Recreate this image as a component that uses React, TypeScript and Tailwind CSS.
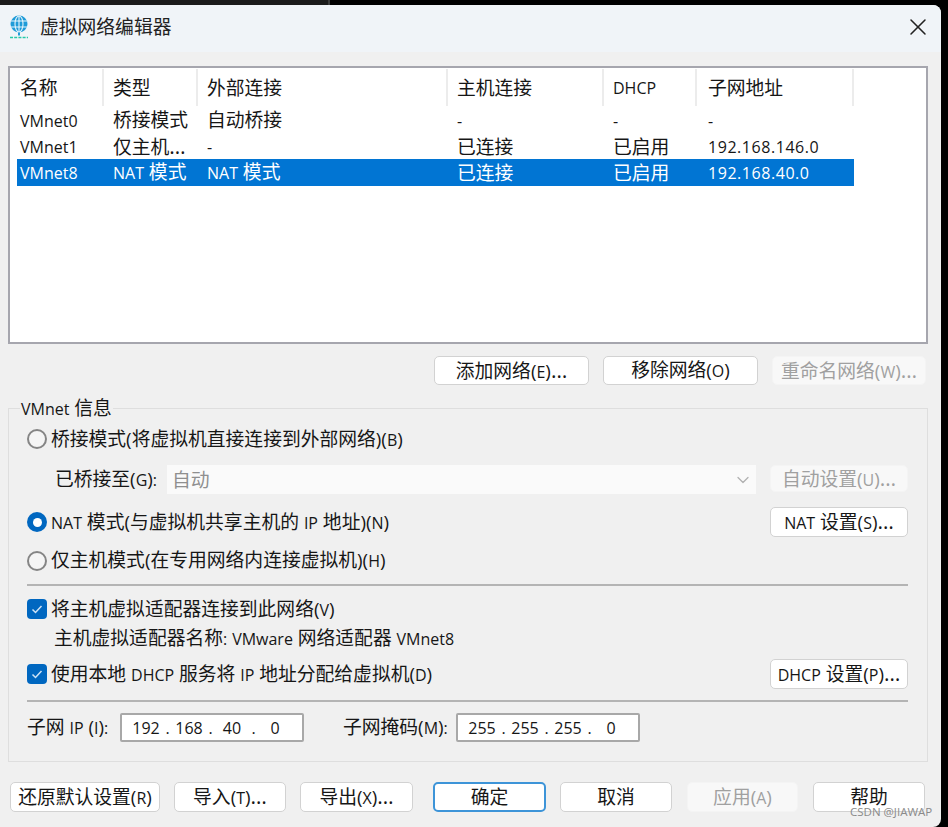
import React from 'react';
import { ChevronDown, X } from 'lucide-react';

const FONT = 'font-["Open_Sans","Noto_Sans_CJK_SC",sans-serif]';

const COLS = [
  { w: 'w-[87px]', pad: 'pl-[3px]' },
  { w: 'w-[94px]', pad: 'pl-[9px]' },
  { w: 'w-[250px]', pad: 'pl-[9px]' },
  { w: 'w-[156px]', pad: 'pl-[9px]' },
  { w: 'w-[93px]', pad: 'pl-[9px]' },
  { w: 'w-[157px]', pad: 'pl-[11px]' },
];

const HEADERS = ['名称', '类型', '外部连接', '主机连接', 'DHCP', '子网地址'];

const ROWS = [
  { cells: ['VMnet0', '桥接模式', '自动桥接', '-', '-', '-'], h: 'h-[26px]', selected: false },
  { cells: ['VMnet1', '仅主机…', '-', '已连接', '已启用', '192.168.146.0'], h: 'h-[26px] pt-[1px]', selected: false },
  { cells: ['VMnet8', 'NAT 模式', 'NAT 模式', '已连接', '已启用', '192.168.40.0'], h: 'h-[27px]', selected: true },
];

// latin runs sit smaller than the CJK around them, as in the dialog font;
// brackets and spaces stay at the full size
function T({ children }: { children: string }) {
  const parts = children.split(/([\x21-\x27\x2a-\x7e]+|…)/).filter(Boolean);
  return (
    <>
      {parts.map((p, i) => {
        if (p === '…') return <span key={i} className="text-[21px]">{p}</span>;
        if (/^[\x21-\x27\x2a-\x7e]+$/.test(p)) return <span key={i} className="text-[16px]">{p}</span>;
        return <span key={i} className="whitespace-pre">{p}</span>;
      })}
    </>
  );
}

function Btn({ className, children, disabled, primary }: { className: string; children: string; disabled?: boolean; primary?: boolean }) {
  const look = disabled
    ? 'bg-[#f8f8f8] border-[#f4f4f4] text-[#a0a0a0]'
    : primary
      ? 'bg-white border-[#3d94d8] border-2 text-[#161616]'
      : 'bg-white border-[#d2d2d2] text-[#161616]';
  return (
    <div className={`flex shrink-0 items-center justify-center whitespace-nowrap rounded-[5px] border ${look} ${className}`}>
      <div><T>{children}</T></div>
    </div>
  );
}

function Radio({ checked }: { checked?: boolean }) {
  if (checked) {
    return (
      <span className="flex h-[20px] w-[20px] shrink-0 items-center justify-center rounded-full bg-[#0067c0]">
        <span className="h-[9px] w-[9px] rounded-full bg-white" />
      </span>
    );
  }
  return <span className="h-[20px] w-[20px] shrink-0 rounded-full border-2 border-[#858585] bg-[#f5f5f5]" />;
}

function Check() {
  return (
    <span className="flex h-[20px] w-[20px] shrink-0 items-center justify-center rounded-[4px] bg-[#0067c0]">
      <svg viewBox="0 0 20 20" className="h-[20px] w-[20px]" fill="none" stroke="#cfe3f5" strokeWidth="1.5">
        <path d="M5.5 10.5l3 3 6-6.5" />
      </svg>
    </span>
  );
}

function NetIcon() {
  return (
    <svg viewBox="0 0 20 24" className="h-[24px] w-[20px] shrink-0" fill="none">
      <circle cx="10" cy="9" r="8.5" fill="#1f9bd8" />
      <g stroke="#e8f5fb" strokeWidth="1.1">
        <ellipse cx="10" cy="9" rx="4" ry="8" />
        <path d="M10 1v16M2 6h16M2 12h16" />
      </g>
      <path d="M10 17.5v3" stroke="#1f9bd8" strokeWidth="2" />
      <path d="M1 22.5h18" stroke="#25c9a8" strokeWidth="1.6" strokeDasharray="3 1.2" />
    </svg>
  );
}

function Sep() {
  return <div className="h-[2px] bg-[#b4b4b4]" />;
}

function Ip({ parts }: { parts: string[] }) {
  return (
    <div className="flex h-[29px] w-[184px] shrink-0 items-center rounded-[2px] border-2 border-[#a8a8a8] bg-white pl-[5px] text-[16px] text-[#161616]">
      {parts.map((p, i) => (
        <React.Fragment key={i}>
          <span className="w-[38px] shrink-0 text-center">{p}</span>
          {i < 3 && <span className="w-[5px] shrink-0 text-center">.</span>}
        </React.Fragment>
      ))}
    </div>
  );
}

export default function App() {
  return (
    <div className={`relative h-[827px] w-[948px] overflow-hidden bg-black text-[18.8px] leading-[26px] text-[#161616] ${FONT}`}>
      {/* strip of the desktop behind the dialog */}
      <div className="flex h-[5px]">
        <div className="w-[328px] bg-[#1b1b1b]" />
        <div className="w-[2px] bg-[#3a3a3a]" />
        <div className="flex-1 bg-black" />
      </div>

      <div className="flex h-[822px] w-[941px] flex-col rounded-tr-[8px] rounded-br-[8px] bg-[#f0f0f0]">
        {/* Title bar */}
        <div className="flex h-[47px] shrink-0 items-center rounded-tr-[8px] bg-[#f0f4f8] pb-[4px] pl-[9px] pr-[9px]">
          <NetIcon />
          <span className="ml-[11px] flex-1 text-[#222]">虚拟网络编辑器</span>
          <X className="h-[28px] w-[28px] text-[#222]" strokeWidth={1.3} />
        </div>

        <div className="flex flex-1 flex-col pl-[8px] pr-[13px]">
          {/* Network list */}
          <div className="mt-[14px] h-[278px] shrink-0 border-2 border-[#a6a6ae] bg-white pl-[7px]">
            <div className="flex h-[39px] items-center">
              {HEADERS.map((h, i) => (
                <div key={h} className={`flex h-[37px] items-center border-r-2 border-[#ececec] ${COLS[i].w} ${COLS[i].pad}`}>
                  <div><T>{h}</T></div>
                </div>
              ))}
            </div>
            {ROWS.map(r => (
              <div key={r.cells[0]} className={`flex items-center ${r.h} ${r.selected ? 'w-[837px] bg-[#0175d3] text-white' : ''}`}>
                {r.cells.map((c, i) => (
                  <div key={i} className={`whitespace-nowrap ${COLS[i].w} ${COLS[i].pad} ${i === 5 ? 'tracking-[0.55px]' : ''}`}>
                    <T>{c}</T>
                  </div>
                ))}
              </div>
            ))}
          </div>

          {/* List buttons */}
          <div className="mt-[12px] flex h-[29px] shrink-0 justify-end gap-[14px] pr-[2px]">
            <Btn className="w-[155px]">添加网络(E)…</Btn>
            <Btn className="w-[155px]">移除网络(O)</Btn>
            <Btn className="w-[154px]" disabled>重命名网络(W)…</Btn>
          </div>

          {/* VMnet info */}
          <fieldset className="mt-[10px] border border-[#dedede] pl-[18px] pr-[19px] pb-[19px]">
            <legend className="ml-[-7px] h-[26px] px-[1px] leading-[26px]"><T>VMnet 信息</T></legend>

            <div className="flex h-[36px] items-center gap-[4px]">
              <Radio />
              <span><T>桥接模式(将虚拟机直接连接到外部网络)(B)</T></span>
            </div>

            <div className="mt-[8px] flex h-[29px] items-center pl-[28px]">
              <span className="w-[112px] shrink-0"><T>已桥接至(G):</T></span>
              <div className="flex h-[29px] flex-1 items-center justify-between bg-[#fafafa] pl-[5px] pr-[3px] text-[#8f8f8f]">
                <span>自动</span>
                <ChevronDown className="h-[20px] w-[20px] text-[#b0b0b0]" strokeWidth={1.5} />
              </div>
              <Btn className="ml-[14px] h-[27px] w-[138px] self-start" disabled>自动设置(U)…</Btn>
            </div>

            <div className="mt-[13px] flex h-[30px] items-center gap-[4px]">
              <Radio checked />
              <span className="flex-1"><T>NAT 模式(与虚拟机共享主机的 IP 地址)(N)</T></span>
              <Btn className="h-[30px] w-[138px]">NAT 设置(S)…</Btn>
            </div>

            <div className="flex h-[47px] items-center gap-[4px]">
              <Radio />
              <span><T>仅主机模式(在专用网络内连接虚拟机)(H)</T></span>
            </div>

            <Sep />

            <div className="mt-[10px] flex h-[26px] items-center gap-[4px]">
              <Check />
              <span><T>将主机虚拟适配器连接到此网络(V)</T></span>
            </div>
            <div className="mt-[3px] h-[26px] pl-[27px]"><T>主机虚拟适配器名称: VMware 网络适配器 VMnet8</T></div>

            <div className="mt-[8px] flex h-[30px] items-center gap-[4px]">
              <Check />
              <span className="flex-1"><T>使用本地 DHCP 服务将 IP 地址分配给虚拟机(D)</T></span>
              <Btn className="h-[30px] w-[138px]">DHCP 设置(P)…</Btn>
            </div>

            <div className="mt-[11px]"><Sep /></div>

            <div className="mt-[11px] flex h-[29px] items-center">
              <span className="w-[93px] shrink-0"><T>子网 IP (I):</T></span>
              <Ip parts={['192', '168', '40', '0']} />
              <span className="ml-[39px] w-[113px] shrink-0"><T>子网掩码(M):</T></span>
              <Ip parts={['255', '255', '255', '0']} />
            </div>
          </fieldset>

          {/* Dialog buttons */}
          <div className="mt-[20px] flex h-[30px] shrink-0 pl-[2px]">
            <Btn className="w-[150px]">还原默认设置(R)</Btn>
            <Btn className="ml-[14px] w-[112px]">导入(T)…</Btn>
            <Btn className="ml-[14px] w-[113px]">导出(X)…</Btn>
            <Btn className="ml-[20px] w-[113px]" primary>确定</Btn>
            <Btn className="ml-[14px] w-[112px]">取消</Btn>
            <Btn className="ml-[15px] w-[111px]" disabled>应用(A)</Btn>
            <Btn className="ml-[15px] w-[112px]">帮助</Btn>
          </div>
        </div>
      </div>

      {/* CSDN watermark */}
      <div className="absolute left-[850px] top-[804px] text-[11.5px] leading-[16px] text-[#8a8a8a]">CSDN @JIAWAP</div>
    </div>
  );
}
